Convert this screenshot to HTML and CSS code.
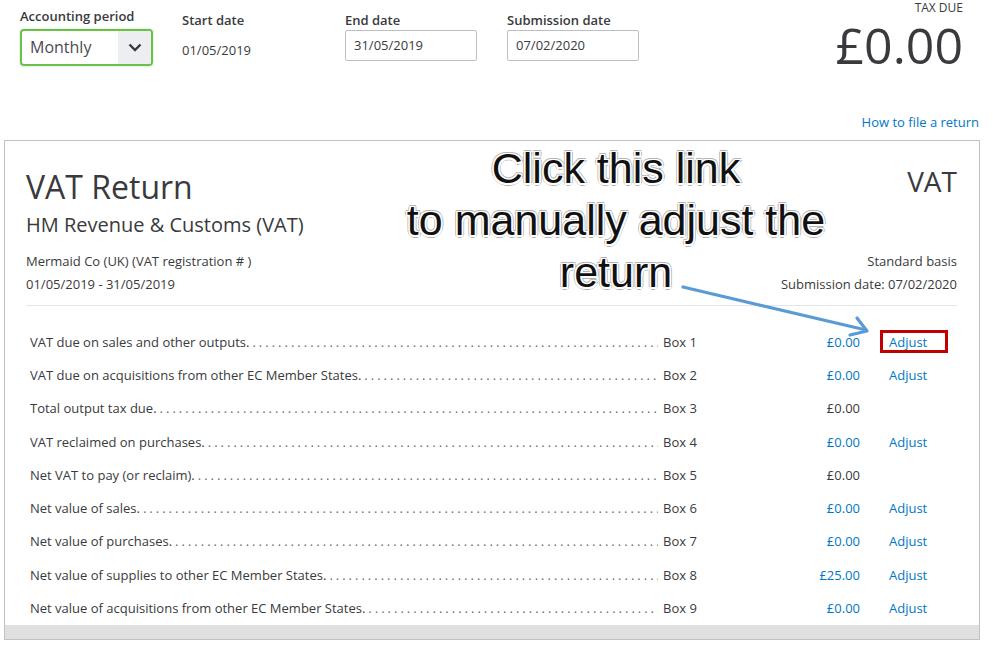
FILE: index.html
```html
<!DOCTYPE html>
<html lang="en">
<head>
    <meta charset="UTF-8">
    <meta name="viewport" content="width=device-width, initial-scale=1.0">
    <title>VAT Return</title>
    <link rel="stylesheet" href="styles.css">
</head>
<body>
    <div class="top-bar">
        <div class="field field-period">
            <div class="field-label">Accounting period</div>
            <div class="select">
                <span class="select-value">Monthly</span>
                <span class="select-arrow">
                    <svg width="14" height="9" viewBox="0 0 14 9"><polyline points="1.5,1.5 7,7 12.5,1.5" fill="none" stroke="#393a3d" stroke-width="2.4"/></svg>
                </span>
            </div>
        </div>
        <div class="field field-start">
            <div class="field-label">Start date</div>
            <div class="field-text">01/05/2019</div>
        </div>
        <div class="field">
            <div class="field-label">End date</div>
            <div class="date-input">31/05/2019</div>
        </div>
        <div class="field">
            <div class="field-label">Submission date</div>
            <div class="date-input">07/02/2020</div>
        </div>
        <div class="tax-due">
            <div class="tax-due-label">TAX DUE</div>
            <div class="tax-due-amount">£0.00</div>
        </div>
    </div>

    <div class="help-row">
        <a class="link" href="#">How to file a return</a>
    </div>

    <div class="card">
        <div class="card-head">
            <h1 class="title">VAT Return</h1>
            <div class="title-right">VAT</div>
            <div class="subtitle">HM Revenue &amp; Customs (VAT)</div>
            <div></div>
            <div class="meta">
                <div>Mermaid Co (UK) (VAT registration # )</div>
                <div>01/05/2019 - 31/05/2019</div>
            </div>
            <div class="meta meta-right">
                <div>Standard basis</div>
                <div>Submission date: 07/02/2020</div>
            </div>
        </div>

        <div class="rows">
            <div class="row">
                <span class="row-label">VAT due on sales and other outputs.</span>
                <span class="row-box">Box 1</span>
                <span class="row-amount link">£0.00</span>
                <span class="row-adjust"><a class="link" href="#">Adjust</a><span class="callout-box"></span></span>
            </div>
            <div class="row">
                <span class="row-label">VAT due on acquisitions from other EC Member States.</span>
                <span class="row-box">Box 2</span>
                <span class="row-amount link">£0.00</span>
                <span class="row-adjust"><a class="link" href="#">Adjust</a></span>
            </div>
            <div class="row">
                <span class="row-label">Total output tax due.</span>
                <span class="row-box">Box 3</span>
                <span class="row-amount">£0.00</span>
                <span class="row-adjust"></span>
            </div>
            <div class="row">
                <span class="row-label">VAT reclaimed on purchases.</span>
                <span class="row-box">Box 4</span>
                <span class="row-amount link">£0.00</span>
                <span class="row-adjust"><a class="link" href="#">Adjust</a></span>
            </div>
            <div class="row">
                <span class="row-label">Net VAT to pay (or reclaim).</span>
                <span class="row-box">Box 5</span>
                <span class="row-amount">£0.00</span>
                <span class="row-adjust"></span>
            </div>
            <div class="row">
                <span class="row-label">Net value of sales.</span>
                <span class="row-box">Box 6</span>
                <span class="row-amount link">£0.00</span>
                <span class="row-adjust"><a class="link" href="#">Adjust</a></span>
            </div>
            <div class="row">
                <span class="row-label">Net value of purchases.</span>
                <span class="row-box">Box 7</span>
                <span class="row-amount link">£0.00</span>
                <span class="row-adjust"><a class="link" href="#">Adjust</a></span>
            </div>
            <div class="row">
                <span class="row-label">Net value of supplies to other EC Member States.</span>
                <span class="row-box">Box 8</span>
                <span class="row-amount link">£25.00</span>
                <span class="row-adjust"><a class="link" href="#">Adjust</a></span>
            </div>
            <div class="row">
                <span class="row-label">Net value of acquisitions from other EC Member States.</span>
                <span class="row-box">Box 9</span>
                <span class="row-amount link">£0.00</span>
                <span class="row-adjust"><a class="link" href="#">Adjust</a></span>
            </div>
        </div>
        <div class="card-foot"></div>

        <div class="callout-text">Click this link<br>to manually adjust the<br>return</div>
        <svg class="callout-arrow" width="200" height="60" viewBox="0 0 200 60">
            <line x1="8" y1="6" x2="191" y2="49" stroke="#5b9bd5" stroke-width="3.2" stroke-linecap="round"/>
            <polyline points="182,37 192,50 175,54" fill="none" stroke="#5b9bd5" stroke-width="3.2" stroke-linecap="round" stroke-linejoin="round"/>
        </svg>
    </div>
</body>
</html>
```

FILE: styles.css
```css
body {
    margin: 0;
    font-family: "Open Sans", Arial, sans-serif;
    color: #393a3d;
    background-color: #ffffff;
}
.link {
    color: #0077c5;
    text-decoration: none;
}
.top-bar {
    display: flex;
    padding: 0 20px 0 20px;
    height: 110px;
}
.field {
    width: 132px;
    margin-right: 30px;
}
.field-label {
    font-size: 13px;
    font-weight: 600;
    line-height: 18px;
    margin-top: 11px;
    margin-bottom: 1px;
    color: #393a3d;
}
.field-period {
    width: 133px;
    margin-right: 29px;
}
.field-period .field-label {
    margin-top: 7px;
    margin-bottom: 4px;
}
.select {
    display: flex;
    height: 33px;
    border: 2px solid #6cc04a;
    border-radius: 4px;
    box-shadow: 0 0 2px rgba(108, 192, 74, 0.6);
    overflow: hidden;
}
.select-value {
    flex: 1;
    font-size: 16px;
    line-height: 33px;
    padding-left: 8px;
    color: #4a4b50;
}
.select-arrow {
    width: 33px;
    background-color: #eceef1;
    display: flex;
    align-items: center;
    justify-content: center;
}
.field-start {
    width: 133px;
    margin-right: 30px;
}
.field-text {
    font-size: 13px;
    line-height: 18px;
    margin-top: 12px;
}
.date-input {
    height: 29px;
    border: 1px solid #babec5;
    border-radius: 2px;
    font-size: 13px;
    line-height: 29px;
    padding-left: 8px;
    color: #393a3d;
}
.tax-due {
    margin-left: auto;
    text-align: right;
    margin-right: 16px;
}
.tax-due-label {
    font-size: 12px;
    line-height: 14px;
    margin-top: 1px;
    color: #393a3d;
}
.tax-due-amount {
    font-size: 50px;
    line-height: 50px;
    margin-top: 5px;
}
.help-row {
    text-align: right;
    padding-right: 20px;
    font-size: 13px;
    line-height: 18px;
    margin-top: 3px;
}
.card {
    position: relative;
    margin: 9px 19px 0 4px;
    border: 1px solid #bfc2c6;
}
.card-head {
    display: grid;
    grid-template-columns: 1fr auto;
    padding: 26px 22px 0 21px;
}
.title {
    margin: 0;
    font-size: 32px;
    font-weight: 400;
    line-height: 40px;
}
.title-right {
    font-size: 28px;
    line-height: 40px;
    text-align: right;
    margin-top: -6px;
}
.subtitle {
    font-size: 20px;
    line-height: 26px;
    margin-top: 5px;
}
.meta {
    font-size: 13px;
    line-height: 23px;
    margin-top: 12px;
    padding-bottom: 9px;
    border-bottom: 1px solid #e3e5e8;
}
.meta-right {
    text-align: right;
}
.rows {
    padding: 19px 27px 0 25px;
}
.row {
    display: flex;
    align-items: center;
    height: 33.3px;
    font-size: 13px;
}
.row-label {
    flex: 1;
    overflow: hidden;
    white-space: nowrap;
    margin-right: 5px;
}
.row-label::after {
    content: "........................................................................................................................";
    margin-left: 3px;
    letter-spacing: 3px;
    color: #6b6c72;
}
.row-box {
    width: 80px;
}
.row-amount {
    width: 117px;
    text-align: right;
}
.row-adjust {
    position: relative;
    width: 63px;
    margin-left: 29px;
}
.callout-box {
    position: absolute;
    left: -9px;
    top: -3px;
    width: 62px;
    height: 17px;
    border: 3px solid #c00000;
}
.card-foot {
    height: 14px;
    background-color: #e0e0e0;
}
.callout-text {
    position: absolute;
    left: 386px;
    top: 1px;
    width: 450px;
    text-align: center;
    font-family: "Liberation Sans", Arial, sans-serif;
    font-size: 43px;
    line-height: 52px;
    color: #111111;
    text-shadow:
        1px 0 #fff, -1px 0 #fff, 0 1px #fff, 0 -1px #fff,
        1.5px 1.5px #fff, -1.5px 1.5px #fff, 1.5px -1.5px #fff, -1.5px -1.5px #fff,
        2.5px 0 #b4b4b4, -2.5px 0 #b4b4b4, 0 2.5px #b4b4b4, 0 -2.5px #b4b4b4,
        1.8px 1.8px #b4b4b4, -1.8px 1.8px #b4b4b4, 1.8px -1.8px #b4b4b4, -1.8px -1.8px #b4b4b4;
}
.callout-arrow {
    position: absolute;
    left: 670px;
    top: 140px;
}
```
